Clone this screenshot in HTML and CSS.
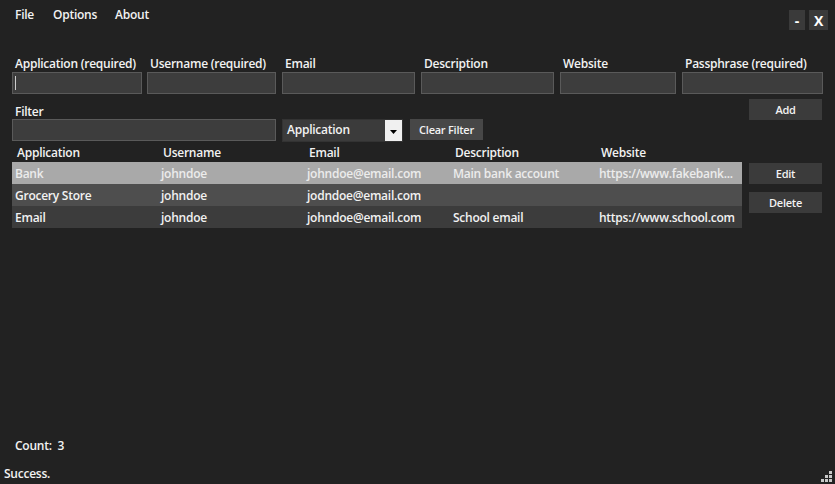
FILE: index.html
```html
<!DOCTYPE html>
<html>
<head>
<meta charset="utf-8">
<link rel="stylesheet" href="styles.css">
</head>
<body>
<div class="app">
  <div class="topbar">
    <nav class="menu">
      <span class="menu-item">File</span>
      <span class="menu-item">Options</span>
      <span class="menu-item">About</span>
    </nav>
    <div class="winbtns">
      <span class="winbtn">-</span>
      <span class="winbtn">X</span>
    </div>
  </div>

  <div class="fields">
    <label class="field f1"><span class="lbl">Application (required)</span><span class="input caret"></span></label>
    <label class="field f2"><span class="lbl">Username (required)</span><span class="input"></span></label>
    <label class="field f3"><span class="lbl">Email</span><span class="input"></span></label>
    <label class="field f4"><span class="lbl">Description</span><span class="input"></span></label>
    <label class="field f5"><span class="lbl">Website</span><span class="input"></span></label>
    <label class="field f6"><span class="lbl">Passphrase (required)</span><span class="input"></span></label>
  </div>

  <div class="filterrow">
    <div class="filterleft">
      <span class="lbl">Filter</span>
      <div class="filtercontrols">
        <span class="input filterinput"></span>
        <span class="combo"><span class="combo-text">Application</span><span class="combo-arrow"><svg width="7" height="4" viewBox="0 0 7 4"><path d="M0 0h7L3.5 4z" fill="#000"/></svg></span></span>
        <span class="btn clear">Clear Filter</span>
      </div>
    </div>
    <span class="btn side add">Add</span>
  </div>

  <div class="tablearea">
    <div class="table">
      <div class="row head">
        <span>Application</span><span>Username</span><span>Email</span><span>Description</span><span>Website</span>
      </div>
      <div class="row r1">
        <span>Bank</span><span>johndoe</span><span>johndoe@email.com</span><span>Main bank account</span><span>https://www.fakebank...</span>
      </div>
      <div class="row r2">
        <span>Grocery Store</span><span>johndoe</span><span>jodndoe@email.com</span><span></span><span></span>
      </div>
      <div class="row r3">
        <span>Email</span><span>johndoe</span><span>johndoe@email.com</span><span>School email</span><span>https://www.school.com</span>
      </div>
    </div>
    <div class="actions">
      <span class="btn side edit">Edit</span>
      <span class="btn side delete">Delete</span>
    </div>
  </div>

  <div class="spacer"></div>
  <div class="count">Count:&nbsp; 3</div>
  <div class="status">
    <span>Success.</span>
    <svg class="grip" width="11" height="11" viewBox="0 0 11 11">
      <rect x="8" y="0" width="3" height="3" fill="#c8c8c8"/>
      <rect x="4" y="4" width="3" height="3" fill="#c8c8c8"/>
      <rect x="8" y="4" width="3" height="3" fill="#c8c8c8"/>
      <rect x="0" y="8" width="3" height="3" fill="#c8c8c8"/>
      <rect x="4" y="8" width="3" height="3" fill="#c8c8c8"/>
      <rect x="8" y="8" width="3" height="3" fill="#c8c8c8"/>
    </svg>
  </div>
</div>
</body>
</html>
```

FILE: styles.css
```css
* { box-sizing: border-box; }
html, body { margin: 0; padding: 0; }
body {
  width: 835px;
  height: 484px;
  background: #222222;
  color: #f2f2f2;
  font-family: "Open Sans", "Noto Sans", sans-serif;
  font-weight: 600;
  font-size: 12px;
  letter-spacing: -0.25px;
  overflow: hidden;
}
.app {
  display: flex;
  flex-direction: column;
  height: 484px;
}
.topbar {
  display: flex;
  justify-content: space-between;
  align-items: flex-start;
  padding: 6px 7px 0 15px;
  height: 56px;
}
.menu { display: flex; line-height: 18px; }
.menu-item { margin-right: 19px; }
.menu-item:nth-child(2) { margin-right: 18px; }
.winbtns { display: flex; gap: 4px; margin-top: 4px; }
.winbtn {
  width: 16px; height: 20px;
  background: #3a3a3a;
  color: #fff;
  font-weight: 700;
  font-size: 14px;
  display: flex; align-items: center; justify-content: center;
}
.winbtn:last-child { width: 19px; }

.fields {
  display: flex;
  padding-left: 12px;
  gap: 6px;
}
.field { display: flex; flex-direction: column; white-space: nowrap; }
.lbl { padding-left: 3px; line-height: 16px; height: 16px; }
.input {
  display: block;
  height: 22px;
  background: #3d3d3d;
  border: 1px solid #5a5a5a;
}
.f1 { width: 130px; }
.f2 { width: 129px; margin-left: -1px; }
.f3 { width: 133px; }
.f4 { width: 133px; }
.f5 { width: 116px; }
.f6 { width: 141px; }
.caret { position: relative; }
.caret::before {
  content: "";
  position: absolute;
  left: 2px; top: 3px;
  width: 1px; height: 14px;
  background: #ccc;
}

.filterrow {
  display: flex;
  justify-content: space-between;
  align-items: flex-start;
  padding: 5px 13px 0 12px;
}
.filterleft { display: flex; flex-direction: column; margin-top: 5px; }
.filtercontrols { display: flex; align-items: flex-start; margin-top: -1px; }
.filterinput { width: 264px; }
.combo {
  display: flex;
  width: 121px; height: 23px;
  margin-left: 6px;
  background: #3b3b3b;
  border: 1px solid #333;
}
.combo-text { flex: 1; padding-left: 4px; line-height: 19px; }
.combo-arrow {
  width: 17px;
  background: #f0f0f0;
  display: flex; align-items: center; justify-content: center;
  padding-top: 2px;
}
.btn {
  display: flex; align-items: center; justify-content: center;
  background: #3b3b3b;
  color: #f2f2f2;
}
.clear {
  width: 73px; height: 21px;
  margin-left: 7px;
  background: #474747;
  font-size: 11px;
}
.side { width: 73px; height: 21px; font-size: 11px; }

.tablearea {
  display: flex;
  padding: 0 13px 0 12px;
  justify-content: space-between;
}
.table { width: 730px; }
.row {
  display: grid;
  grid-template-columns: 146px 146px 146px 146px 146px;
  height: 22px;
  align-items: center;
  white-space: nowrap;
}
.row span { padding-left: 3px; overflow: hidden; }
.row.head { height: 20px; align-items: end; }
.row.head span { padding-left: 5px; line-height: 16px; padding-bottom: 1px; }
.r1 { background: #a9a9a9; color: #ececec; }
.r2 { background: #4e4e4e; }
.r3 { background: #3c3c3c; }
.actions {
  display: flex; flex-direction: column;
  gap: 8px;
  margin-top: 21px;
}

.spacer { flex: 1; }
.count { padding-left: 15px; line-height: 18px; margin-bottom: 11px; }
.status {
  display: flex;
  justify-content: space-between;
  align-items: flex-end;
  padding: 0 3px 2px 4px;
  line-height: 16px;
}
```
